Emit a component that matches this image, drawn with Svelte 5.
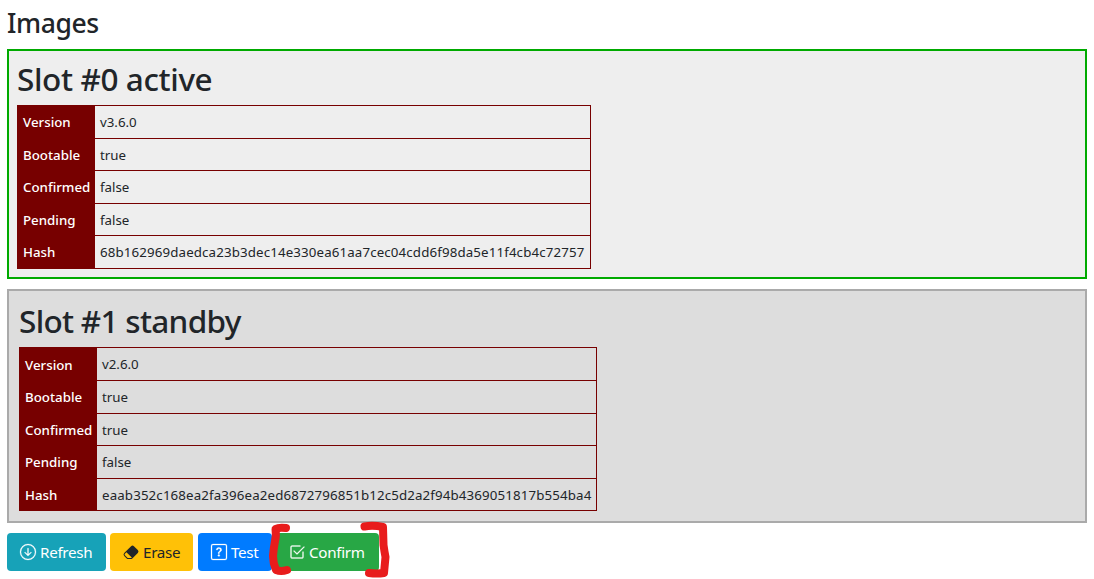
<script>
  const slots = [
    {
      title: 'Slot #0 active', kind: 'active',
      rows: [['Version', 'v3.6.0'], ['Bootable', 'true'], ['Confirmed', 'false'], ['Pending', 'false'],
        ['Hash', '68b162969daedca23b3dec14e330ea61aa7cec04cdd6f98da5e11f4cb4c72757']]
    },
    {
      title: 'Slot #1 standby', kind: 'standby',
      rows: [['Version', 'v2.6.0'], ['Bootable', 'true'], ['Confirmed', 'true'], ['Pending', 'false'],
        ['Hash', 'eaab352c168ea2fa396ea2ed6872796851b12c5d2a2f94b4369051817b554ba4']]
    }
  ];
</script>

<main>
  <h3>Images</h3>
  {#each slots as slot}
    <section class={slot.kind}>
      <h2>{slot.title}</h2>
      <dl>
        {#each slot.rows as [name, value]}
          <dt><span>{name}</span></dt>
          <dd><span class:hash={name === 'Hash'}>{value}</span></dd>
        {/each}
      </dl>
    </section>
  {/each}

  <div class="buttons">
    <button class="refresh">
      <svg viewBox="0 0 16 16"><path fill-rule="evenodd" d="M1 8a7 7 0 1 0 14 0A7 7 0 0 0 1 8zm15 0A8 8 0 1 1 0 8a8 8 0 0 1 16 0zM8.5 4.5a.5.5 0 0 0-1 0v5.793L5.354 8.146a.5.5 0 1 0-.708.708l3 3a.5.5 0 0 0 .708 0l3-3a.5.5 0 0 0-.708-.708L8.5 10.293V4.5z"/></svg>
      <span>Refresh</span>
    </button>
    <button class="erase">
      <svg viewBox="0 0 16 16"><path d="M8.086 2.207a2 2 0 0 1 2.828 0l3.879 3.879a2 2 0 0 1 0 2.828l-5.5 5.5A2 2 0 0 1 7.879 15H5.12a2 2 0 0 1-1.414-.586l-2.5-2.5a2 2 0 0 1 0-2.828l6.879-6.879zm.66 11.34L3.453 8.254 1.914 9.793a1 1 0 0 0 0 1.414l2.5 2.5a1 1 0 0 0 .707.293H7.88a1 1 0 0 0 .707-.293l.16-.16z"/></svg>
      <span>Erase</span>
    </button>
    <button class="test">
      <svg viewBox="0 0 16 16"><path d="M14 1a1 1 0 0 1 1 1v12a1 1 0 0 1-1 1H2a1 1 0 0 1-1-1V2a1 1 0 0 1 1-1h12zM2 0a2 2 0 0 0-2 2v12a2 2 0 0 0 2 2h12a2 2 0 0 0 2-2V2a2 2 0 0 0-2-2H2z"/><path d="M5.255 5.786a.237.237 0 0 0 .241.247h.825c.138 0 .248-.113.266-.25.09-.656.54-1.134 1.342-1.134.686 0 1.314.343 1.314 1.168 0 .635-.374.927-.965 1.371-.673.489-1.206 1.06-1.168 1.987l.003.217a.25.25 0 0 0 .25.246h.811a.25.25 0 0 0 .25-.25v-.105c0-.718.273-.927 1.01-1.486.609-.463 1.244-.977 1.244-2.056 0-1.511-1.276-2.241-2.673-2.241-1.267 0-2.655.59-2.75 2.286zm1.557 5.763c0 .533.425.927 1.01.927.609 0 1.028-.394 1.028-.927 0-.552-.42-.94-1.029-.94-.584 0-1.009.388-1.009.94z"/></svg>
      <span>Test</span>
    </button>
    <div class="marked">
      <button class="confirm">
        <svg viewBox="0 0 16 16"><path d="M3 14.5A1.5 1.5 0 0 1 1.5 13V3A1.5 1.5 0 0 1 3 1.5h8a.5.5 0 0 1 0 1H3a.5.5 0 0 0-.5.5v10a.5.5 0 0 0 .5.5h10a.5.5 0 0 0 .5-.5V8a.5.5 0 0 1 1 0v5a1.5 1.5 0 0 1-1.5 1.5H3z"/><path d="m8.354 10.354 7-7a.5.5 0 0 0-.708-.708L8 9.293 5.354 6.646a.5.5 0 1 0-.708.708l3 3a.5.5 0 0 0 .708 0z"/></svg>
        <span>Confirm</span>
      </button>
      <svg class="marks" viewBox="266 519 126 60" aria-hidden="true">
        <path d="M286 528Q279 527 275.500 529Q276.500 536 275 541Q273.500 549 273 556Q273 563 276 570Q281 572 287 570"/>
        <path d="M364.500 526.500Q373 525 383 527L383.500 545Q384.500 552 385.500 557L384 573Q377 574 369 573"/>
      </svg>
    </div>
  </div>
</main>

<style>
  :global(body) { margin: 0; background: #fff; }
  main {
    box-sizing: border-box; width: 1094px; height: 579px; padding: 7px 7px 0; overflow: hidden;
    display: flex; flex-direction: column;
    font-family: "Noto Sans", "Open Sans", sans-serif; color: #212529;
  }
  h2, h3 { margin: 0; font-weight: 500; white-space: nowrap; }
  h3 { height: 42px; font-size: 26.5px; line-height: 33px; letter-spacing: -0.4px; }
  h2 { height: 46px; font-size: 31.5px; line-height: 40px; letter-spacing: -0.38px; }
  section { box-sizing: border-box; width: 1080px; flex: none; border: 2px solid; }
  .active { height: 230px; padding: 8px; background: #eee; border-color: #0a0; margin-bottom: 10px; }
  .standby { height: 234px; padding: 10px; background: #ddd; border-color: #aaa; margin-bottom: 10px; }
  .standby h2 { letter-spacing: -0.7px; }
  dl {
    box-sizing: border-box; margin: 0; display: grid; width: 574px;
    grid-template-columns: 78px 1fr; grid-template-rows: 33px 32px 33px 32px 34px; font-size: 13.3px;
  }
  .standby dl { width: 578px; grid-template-rows: 33px 33px 32px 33px 33px; }
  dt, dd { margin: 0; box-sizing: border-box; white-space: nowrap; line-height: 32px; border-top: 1px solid #700; }
  dt { background: #700; color: #fff; padding-left: 6px; font-weight: 500; }
  .standby dt:first-child { line-height: 34px; }
  dd { padding-left: 5px; border-right: 1px solid #700; }
  dd:last-child { border-bottom: 1px solid #700; }
  .hash { letter-spacing: 0.135px; }
  .buttons { display: flex; }
  button {
    box-sizing: border-box; height: 38px; padding: 0 0 0 13px; border: 0; border-radius: 4px; color: #fff;
    font: 15.2px/38px "Noto Sans", "Open Sans", sans-serif; letter-spacing: -0.3px; display: flex; align-items: center; gap: 4px; white-space: nowrap;
  }
  button svg { width: 16px; height: 16px; fill: currentColor; stroke: currentColor; stroke-width: 0.25; flex: none; overflow: visible; }
  .refresh { width: 99px; background: #17a2b8; margin-right: 4px; }
  .erase { width: 83px; background: #ffc107; color: #212529; margin-right: 5px; }
  .erase svg { stroke: none; }
  .test { width: 74px; background: #007bff; margin-right: 4px; }
  .marked { position: relative; }
  .confirm { width: 103px; background: #28a745; }
  .marks { position: absolute; left: -10px; top: -14px; width: 126px; height: 60px; fill: none; stroke: #e81c1c; stroke-width: 8px; stroke-linecap: round; stroke-linejoin: round; }
</style>
